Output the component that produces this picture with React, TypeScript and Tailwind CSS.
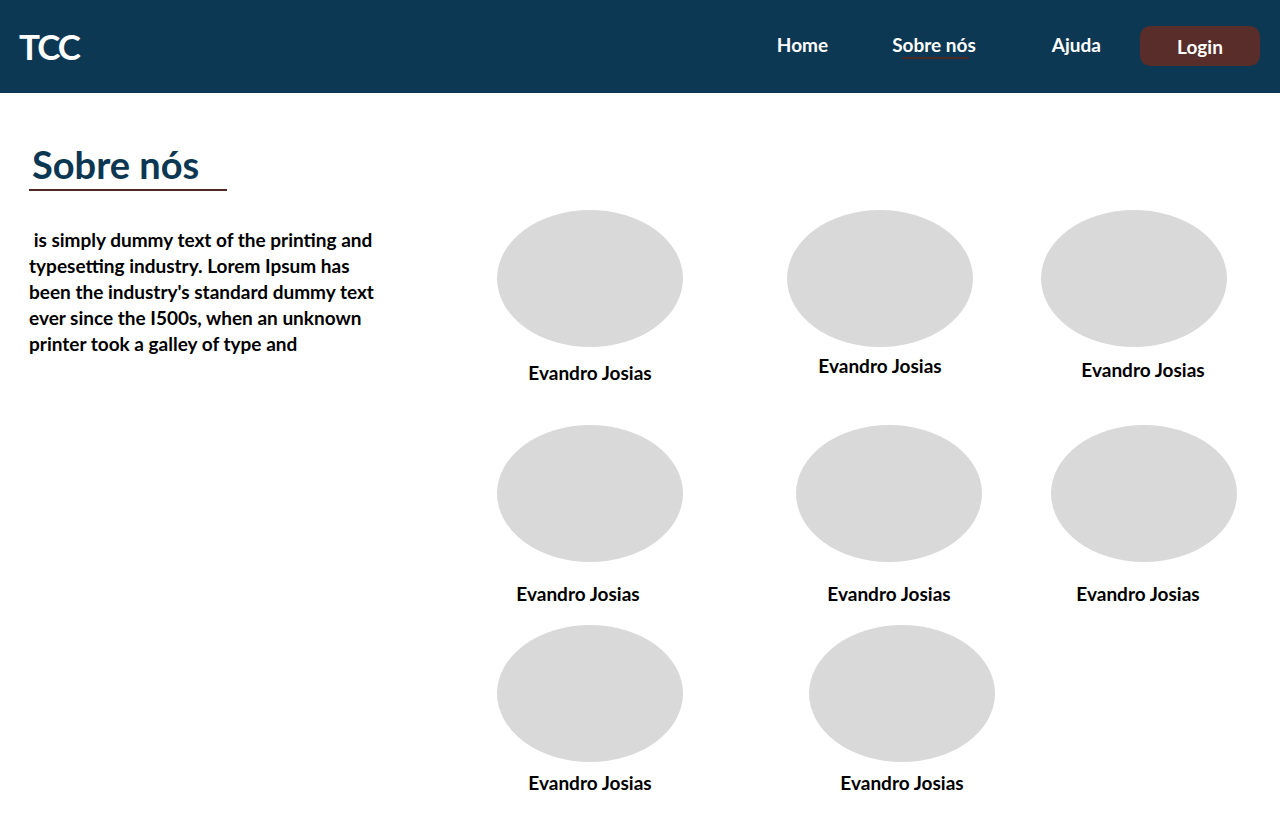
import React from "react";

interface MemberProps {
  name: string;
  width: string;
  labelGap: string;
  labelShift?: string;
}

const Member = ({ name, width, labelGap, labelShift = "" }: MemberProps) => {
  return (
    <div className={`flex flex-col ${width}`}>
      <div className="h-[137px] w-[186px] rounded-[50%] bg-[#d9d9d9]" />
      <p className={`w-[186px] text-center text-[19px] font-bold leading-[22px] text-black ${labelGap} ${labelShift}`}>
        {name}
      </p>
    </div>
  );
};

const App = () => {
  return (
    <div className="min-h-[832px] w-full bg-white font-['Lato','Liberation_Sans',sans-serif]">
      <header className="flex h-[93px] items-center justify-between bg-[#0d3853] pl-[19px] pr-[20px]">
        <span className="text-[35px] font-bold tracking-[-2px] text-white">TCC</span>
        <nav className="flex items-center">
          <a className="mr-[64px] mt-[-2px] text-[19px] font-bold text-white">Home</a>
          <a className="relative mr-[76px] mt-[-2px] text-[19px] font-bold text-white">
            Sobre nós
            <span className="absolute left-[10px] top-[26px] h-[2px] w-[67px] bg-[#4b2824]" />
          </a>
          <a className="mr-[39px] mt-[-2px] text-[19px] font-bold text-white">Ajuda</a>
          <button className="mt-[-1px] h-[40px] w-[120px] rounded-[10px] bg-[#582d2a] pt-[3px] text-[19px] font-bold text-white">
            Login
          </button>
        </nav>
      </header>

      <main className="flex pt-[48px]">
        <section className="w-[497px] pl-[29px]">
          <div className="w-[198px] border-b-2 border-[#4b2824] pb-[2px]">
            <h1 className="pl-[3px] text-[38px] font-bold leading-[46px] text-[#0c3752]">Sobre nós</h1>
          </div>
          <p className="mt-[36px] w-[360px] whitespace-pre-wrap text-[19px] font-bold leading-[26px] text-black">
            {" is simply dummy text of the printing and typesetting industry. Lorem Ipsum has been the industry's standard dummy text ever since the I500s, when an unknown printer took a galley of type and"}
          </p>
        </section>

        <section className="flex flex-col pt-[69px]">
          <div className="flex">
            <Member name="Evandro Josias" width="w-[290px]" labelGap="mt-[15px]" />
            <Member name="Evandro Josias" width="w-[254px]" labelGap="mt-[8px]" />
            <Member name="Evandro Josias" width="w-[186px]" labelGap="mt-[12px]" labelShift="pl-[18px]" />
          </div>
          <div className="mt-[41px] flex">
            <div className="w-[299px]">
              <Member name="Evandro Josias" width="w-[186px]" labelGap="mt-[21px]" labelShift="pr-[24px]" />
            </div>
            <div className="w-[255px]">
              <Member name="Evandro Josias" width="w-[186px]" labelGap="mt-[21px]" />
            </div>
            <Member name="Evandro Josias" width="w-[186px]" labelGap="mt-[21px]" labelShift="pr-[12px]" />
          </div>
          <div className="mt-[20px] flex">
            <div className="w-[312px]">
              <Member name="Evandro Josias" width="w-[186px]" labelGap="mt-[10px]" />
            </div>
            <Member name="Evandro Josias" width="w-[186px]" labelGap="mt-[10px]" />
          </div>
        </section>
      </main>
    </div>
  );
};

export default App;
